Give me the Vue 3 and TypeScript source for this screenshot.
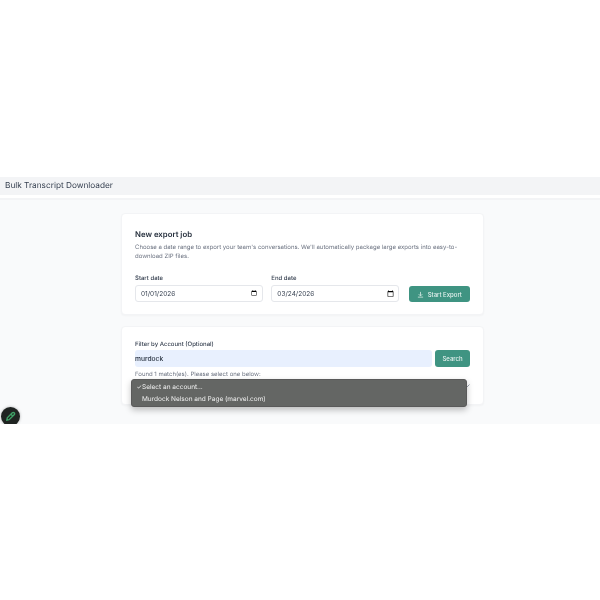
<template>
  <div class="page">
    <div class="spacer"></div>
    <header class="topbar">Bulk Transcript Downloader</header>
    <main class="content">
      <section class="card job">
        <h2>New export job</h2>
        <p class="desc">
          Choose a date range to export your team's conversations. We'll automatically package large exports into
          easy-to-download ZIP files.
        </p>
        <div class="dates">
          <label class="field">
            <span>Start date</span>
            <input type="date" v-model="startDate" />
          </label>
          <label class="field">
            <span>End date</span>
            <input type="date" v-model="endDate" />
          </label>
          <button class="btn export">
            <svg width="7" height="7" viewBox="0 0 24 24" fill="none" stroke="currentColor" stroke-width="2.5">
              <path d="M12 3v13M6 11l6 6 6-6M3 21h18" />
            </svg>
            Start Export
          </button>
        </div>
      </section>

      <section class="card filter">
        <div class="filter-label">Filter by Account (Optional)</div>
        <div class="search-row">
          <input class="search" type="text" v-model="query" />
          <button class="btn search-btn">Search</button>
        </div>
        <p class="found">Found 1 match(es). Please select one below:</p>
        <div class="select-wrap">
          <svg class="caret" width="6" height="4" viewBox="0 0 6 4" fill="none" stroke="#9ca3af">
            <path d="M.5.5 3 3 5.500.5" />
          </svg>
          <ul class="menu">
            <li v-for="opt in options" :key="opt.label">
              <span class="tick">{{ opt.selected ? '✓' : '' }}</span>{{ opt.label }}
            </li>
          </ul>
        </div>
      </section>
      <button class="fab">
        <svg width="11" height="11" viewBox="0 0 24 24" fill="none" stroke="#3fa066" stroke-width="3">
          <path d="M4 20l1-5L16 4a2.800 2.800 0 0 1 4 4L9 19z" />
          <path d="M13 7l4 4" />
        </svg>
      </button>
    </main>
  </div>
</template>

<script setup lang="ts">
import { ref } from 'vue'

const startDate = ref('2026-01-01')
const endDate = ref('2026-03-24')
const query = ref('murdock')

const options = [
  { label: 'Select an account...', selected: true },
  { label: 'Murdock Nelson and Page (marvel.com)', selected: false },
]
</script>

<style>
html,
body {
  background: #fff;
}
</style>

<style scoped>
.page {
  height: 600px;
  overflow: hidden;
  display: flex;
  flex-direction: column;
  font-family: Inter, 'Liberation Sans', sans-serif;
  text-rendering: geometricPrecision;
  background: #fff;
  filter: blur(0.4px);
}
.spacer {
  height: 177px;
}
.topbar {
  height: 18px;
  padding-left: 5px;
  background: #f3f4f6;
  color: #374151;
  font-size: 8.250px;
  line-height: 16px;
}
.content {
  position: relative;
  overflow: hidden;
  height: 226px;
  margin-top: 3px;
  border-top: 2px solid #f3f4f6;
  background: #f9fafb;
  padding: 13px 0 0 5px;
  display: flex;
  flex-direction: column;
  align-items: center;
  gap: 11px;
  box-sizing: border-box;
}
.card {
  width: 363px;
  box-sizing: border-box;
  background: #fff;
  border: 1px solid #f3f4f6;
  border-radius: 4px;
  padding: 13px;
  box-shadow: 0 1px 2px rgba(0, 0, 0, 0.03);
}
.job {
  height: 102px;
  padding-top: 13.500px;
}
.filter {
  position: relative;
  height: 79px;
}
h2 {
  margin: 0;
  font-size: 7.800px;
  line-height: 12px;
  font-weight: 600;
  color: #1f2937;
}
.desc {
  margin: 3.500px 0 0;
  font-size: 6px;
  line-height: 9px;
  color: #6b7280;
}
.dates {
  display: flex;
  align-items: flex-end;
  gap: 8.500px;
  margin-top: 13px;
}
.field {
  display: flex;
  flex-direction: column;
  gap: 2px;
  width: 128px;
  font-size: 6px;
  color: #374151;
}
.field span {
  line-height: 9px;
  font-weight: 500;
}
.field input {
  box-sizing: border-box;
  width: 100%;
  height: 17px;
  padding: 0 2.500px 0 5px;
  border: 1px solid #e5e7eb;
  border-radius: 3px;
  background: #fff;
  font: 6.500px Inter, 'Liberation Sans', sans-serif;
  color: #374151;
}
.field input::-webkit-datetime-edit-month-field,
.field input::-webkit-datetime-edit-day-field,
.field input::-webkit-datetime-edit-year-field,
.field input::-webkit-datetime-edit-text {
  padding: 0;
}
.btn {
  border: 0;
  border-radius: 3px;
  background: #3f9482;
  color: #e6f2ef;
  font: 500 6px Inter, 'Liberation Sans', sans-serif;
}
.export {
  display: flex;
  align-items: center;
  justify-content: center;
  gap: 4px;
  width: 61.500px;
  height: 16px;
  margin-left: 1px;
  padding: 0;
}
.filter-label {
  font-size: 6px;
  line-height: 9px;
  font-weight: 500;
  color: #374151;
}
.search-row {
  display: flex;
  gap: 3px;
  margin-top: 1px;
}
.search {
  flex: 1;
  min-width: 0;
  height: 17px;
  box-sizing: border-box;
  border: 0;
  border-radius: 3px;
  background: #e8f0fe;
  padding: 0;
  font: 500 6.700px Inter, 'Liberation Sans', sans-serif;
  color: #1f2937;
}
.search-btn {
  width: 35px;
  height: 17px;
  padding: 0;
}
.found {
  margin: 2.500px 0 0;
  font-size: 6px;
  line-height: 9px;
  color: #6b7280;
}
.caret {
  position: absolute;
  right: 13px;
  top: 57px;
}
.menu {
  position: absolute;
  left: 9px;
  top: 52px;
  width: 336px;
  height: 28px;
  box-sizing: border-box;
  margin: 0;
  padding: 2px 0;
  list-style: none;
  background: #646664;
  border: 1px solid #5a5a5a;
  border-radius: 3px;
  box-shadow: 0 3px 6px rgba(0, 0, 0, 0.25);
  color: #f1f1f1;
  font-size: 6.500px;
  line-height: 11px;
}
.menu li {
  height: 11.500px;
}
.tick {
  display: inline-block;
  width: 10px;
  padding-left: 4.500px;
  box-sizing: border-box;
  font-size: 6px;
  line-height: 1;
}
.fab {
  position: absolute;
  left: 1px;
  top: 207px;
  width: 19px;
  height: 19px;
  padding: 0;
  border: 0;
  border-radius: 50%;
  background: #1f2321;
  display: flex;
  align-items: center;
  justify-content: center;
  box-shadow: 0 0 3px rgba(0, 0, 0, 0.3);
}
</style>
